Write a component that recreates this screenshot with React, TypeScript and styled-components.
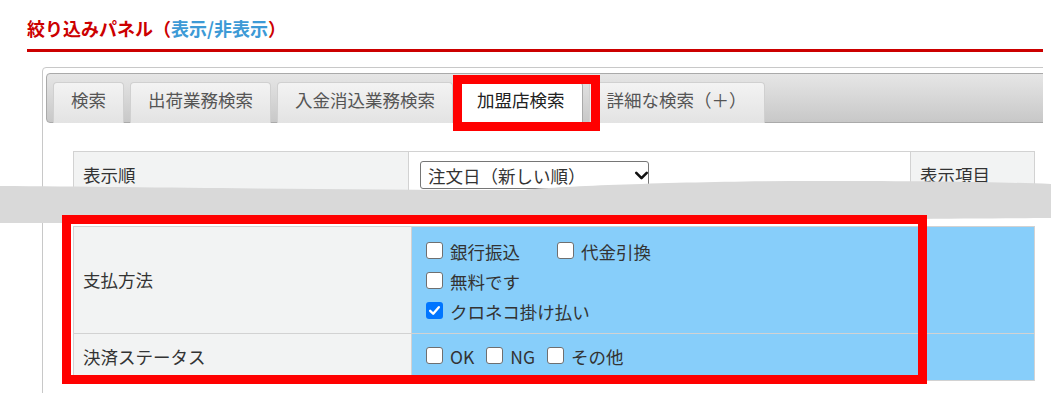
import React from 'react';
import styled, { createGlobalStyle } from 'styled-components';
import { ChevronDown } from 'lucide-react';

const GlobalStyle = createGlobalStyle`
  body {
    margin: 0;
    background: #fff;
    font-family: "Noto Sans CJK JP", "Noto Sans", sans-serif;
    color: #333;
  }
`;

const Page = styled.div`
  position: relative;
  width: 1051px;
  height: 393px;
  overflow: hidden;
`;

const Sheet = styled.div`
  width: 1043px;
  height: 393px;
  overflow: hidden;
  padding-top: 16px;
  box-sizing: border-box;
`;

const Title = styled.h2`
  margin: 0 0 0 27px;
  font-size: 18px;
  line-height: 24px;
  font-weight: bold;
  color: #cc0000;
`;

const ToggleLink = styled.a`
  color: #3d9ad6;
  text-decoration: none;
`;

const Rule = styled.div`
  margin: 9px 0 0 27px;
  height: 3px;
  background: #cc0000;
`;

const Panel = styled.div`
  margin: 15px 0 0 42px;
  width: 1010px;
  height: 400px;
  border: 1px solid #c8c8c8;
  border-radius: 4px;
  padding: 5px 3px;
  box-sizing: border-box;
`;

const TabBar = styled.ul`
  display: flex;
  align-items: stretch;
  gap: 6px;
  height: 50px;
  box-sizing: border-box;
  margin: 0;
  padding: 8px 0 0 6px;
  list-style: none;
  border: 1px solid #aaa;
  border-radius: 4px;
  background: linear-gradient(#e6e6e6, #c8c8c8);
`;

const Tab = styled.li<{ $active?: boolean }>`
  margin-bottom: -1px;
  padding: 5px 17px 0;
  font-size: 17.5px;
  line-height: 24px;
  white-space: nowrap;
  border: 1px solid ${p => (p.$active ? '#aaa' : '#d0d0d0')};
  border-bottom: none;
  border-radius: 4px 4px 0 0;
  background: ${p => (p.$active ? '#fff' : 'linear-gradient(#f3f3f3, #e3e3e3)')};
  color: ${p => (p.$active ? '#212121' : '#555')};
`;

const Content = styled.div`
  padding: 28px 0 0 27px;
`;

const FormTable = styled.table<{ $gapTop?: number }>`
  width: 962px;
  margin-top: ${p => p.$gapTop ?? 0}px;
  border-collapse: collapse;
  table-layout: fixed;
  font-size: 17.5px;
  line-height: 30px;
`;

const Row = styled.tr<{ $h: number }>`
  height: ${p => p.$h}px;
`;

const LabelCell = styled.th<{ $w?: number }>`
  box-sizing: border-box;
  width: ${p => (p.$w ? `${p.$w}px` : 'auto')};
  padding: 0 9px;
  background: #f2f3f3;
  border: 1px solid #d2d2d2;
  text-align: left;
  font-weight: normal;
  vertical-align: middle;
  white-space: nowrap;
`;

const ValueCell = styled.td<{ $w?: number; $blue?: boolean; $top?: boolean; $padLeft?: number }>`
  box-sizing: border-box;
  width: ${p => (p.$w ? `${p.$w}px` : 'auto')};
  padding: ${p => (p.$top ? '10px 0 6px' : '0')};
  padding-left: ${p => p.$padLeft ?? 11}px;
  background: ${p => (p.$blue ? '#87cefa' : '#fff')};
  border: 1px solid #d2d2d2;
  vertical-align: ${p => (p.$top ? 'top' : 'middle')};
`;

const SelectWrap = styled.div`
  position: relative;
  width: 229px;
  height: 28px;
`;

const Select = styled.select`
  appearance: none;
  width: 100%;
  height: 100%;
  padding: 0 0 0 7px;
  border: 1px solid #767676;
  border-radius: 3px;
  background: #fff;
  font-family: inherit;
  font-size: 17.5px;
  color: #333;
`;

const Chevron = styled(ChevronDown)`
  position: absolute;
  left: 211px;
  top: 4px;
  pointer-events: none;
  color: #111;
`;

const CheckLine = styled.div`
  display: flex;
  align-items: center;
  height: 30px;
`;

const CheckLabel = styled.label<{ $gap?: number }>`
  display: inline-flex;
  align-items: center;
  flex-shrink: 0;
  margin-right: ${p => p.$gap ?? 12}px;
  white-space: nowrap;
`;

const Box = styled.span<{ $checked?: boolean }>`
  display: inline-flex;
  flex: 0 0 17px;
  align-items: center;
  justify-content: center;
  width: 17px;
  height: 17px;
  margin: -3px 7px 0 0;
  box-sizing: border-box;
  border: ${p => (p.$checked ? 'none' : '1.5px solid #6f6f6f')};
  border-radius: 3px;
  background: ${p => (p.$checked ? '#0075ff' : '#fff')};
`;

const Callout = styled.div<{ $x: number; $y: number; $w: number; $h: number }>`
  position: absolute;
  left: ${p => p.$x}px;
  top: ${p => p.$y}px;
  width: ${p => p.$w}px;
  height: ${p => p.$h}px;
  border: 9px solid #ff0000;
  box-sizing: border-box;
  pointer-events: none;
`;

const Cut = styled.svg`
  position: absolute;
  left: 0;
  top: 176px;
`;

const Check: React.FC<{ label: string; checked?: boolean; gap?: number }> = ({ label, checked, gap }) => (
  <CheckLabel $gap={gap}>
    <Box $checked={checked} role="checkbox" aria-checked={!!checked}>
      {checked && (
        <svg width="13" height="13" viewBox="0 0 12 12">
          <path d="M2 6.3 L4.8 9 L10 3" fill="none" stroke="#fff" strokeWidth="2.2" strokeLinecap="round" strokeLinejoin="round" />
        </svg>
      )}
    </Box>
    {label}
  </CheckLabel>
);

const tabs = ['検索', '出荷業務検索', '入金消込業務検索', '加盟店検索', '詳細な検索（＋）'];

export default function App() {
  return (
    <Page>
      <GlobalStyle />
      <Sheet>
        <Title>
          絞り込みパネル（<ToggleLink>表示/非表示</ToggleLink>）
        </Title>
        <Rule />
        <Panel>
          <TabBar>
            {tabs.map(t => (
              <Tab key={t} $active={t === '加盟店検索'}>
                {t}
              </Tab>
            ))}
          </TabBar>
          <Content>
            <FormTable>
              <tbody>
                <Row $h={46}>
                  <LabelCell $w={335}>表示順</LabelCell>
                  <ValueCell $w={502}>
                    <SelectWrap>
                      <Select defaultValue="new">
                        <option value="new">注文日（新しい順）</option>
                        <option value="old">注文日（古い順）</option>
                      </Select>
                      <Chevron size={21} strokeWidth={3} />
                    </SelectWrap>
                  </ValueCell>
                  <LabelCell>表示項目</LabelCell>
                </Row>
              </tbody>
            </FormTable>
            <FormTable $gapTop={28}>
              <tbody>
                <Row $h={107}>
                  <LabelCell $w={338}>支払方法</LabelCell>
                  <ValueCell $blue $top $padLeft={14}>
                    <CheckLine>
                      <Check label="銀行振込" gap={37} />
                      <Check label="代金引換" />
                    </CheckLine>
                    <CheckLine>
                      <Check label="無料です" />
                    </CheckLine>
                    <CheckLine>
                      <Check label="クロネコ掛け払い" checked />
                    </CheckLine>
                  </ValueCell>
                </Row>
                <Row $h={47}>
                  <LabelCell>決済ステータス</LabelCell>
                  <ValueCell $blue $padLeft={14}>
                    <CheckLine>
                      <Check label="OK" />
                      <Check label="NG" />
                      <Check label="その他" />
                    </CheckLine>
                  </ValueCell>
                </Row>
              </tbody>
            </FormTable>
          </Content>
        </Panel>
      </Sheet>

      <Cut width="1051" height="50" viewBox="0 0 1051 50">
        <path
          d="M0,10 C150,11 350,14 525,14 C560,10 700,5 820,5 C930,5 1000,6 1051,8 L1051,42 C900,43 600,45 300,46 C150,47 50,47 0,47 Z"
          fill="#d9d9d9"
        />
      </Cut>
      <Callout $x={453} $y={75} $w={147} $h={56} />
      <Callout $x={62} $y={215} $w={865} $h={169} />
    </Page>
  );
}
